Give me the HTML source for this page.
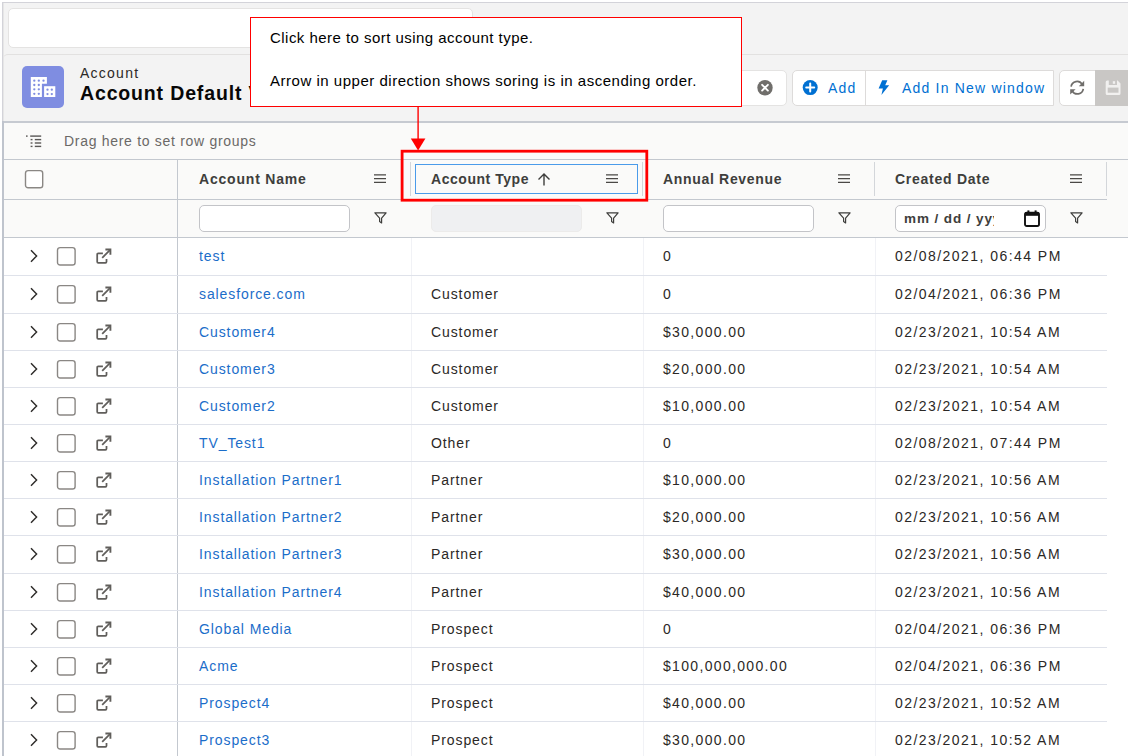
<!DOCTYPE html>
<html lang="en">
<head>
<meta charset="utf-8">
<title>Account Default View</title>
<style>
*{box-sizing:border-box;margin:0;padding:0}
html,body{width:1128px;height:756px;overflow:hidden;background:#fff}
body{font-family:"Liberation Sans","DejaVu Sans",sans-serif;font-size:14px;color:#1b1b1b;position:relative}
.abs{position:absolute}
#frame{left:2px;top:2px;width:1140px;height:770px;background:#f3f3f3;border:1px solid #d3d3d9}
#search{left:8px;top:8px;width:465px;height:40px;background:#fff;border:1px solid #e4e3e2;border-radius:5px}
#hdr{left:3px;top:54px;width:1140px;height:69px;background:#f3f3f3;border-top:1px solid #e2e1e0;border-bottom:2px solid #c6cad1;border-top-left-radius:5px}
#icon{left:22px;top:66px;width:42px;height:42px;border-radius:5px;background:#7f8de1}
#t1{left:80px;top:64px;font-size:14px;letter-spacing:1.25px;color:#2b2826;line-height:18px}
#t2{left:80px;top:80px;font-size:19.5px;font-weight:700;letter-spacing:.85px;color:#080707;line-height:26px;white-space:nowrap}
#sbox{left:600px;top:70px;width:187px;height:36px;background:#fff;border:1px solid #e4e3e2;border-radius:5px}
.bg{background:#fff;border:1px solid #dddbda;border-radius:5px;height:36px;top:70px}
.btn{color:#0070d2;font-size:14px;letter-spacing:1.2px;line-height:34px;white-space:nowrap}
#callout{left:250px;top:17px;width:492px;height:90px;background:#fff;border:1px solid #f00;font-size:15px;color:#000;line-height:20px}
#callout div{position:absolute;left:19px;white-space:nowrap;letter-spacing:.46px}
#grid{left:3px;top:123px;width:1140px;height:640px;background:#fff}
#drag{left:0;top:0;width:1140px;height:37px;background:#fafaf9;border-bottom:1px solid #c3c8cf;color:#6b6967;letter-spacing:.7px;line-height:35px}
#hrow{left:0;top:37px;width:1140px;height:40px;background:#fafaf9}
#frow{left:0;top:77px;width:1140px;height:38px;background:#fafaf9;border-bottom:1px solid #c3c8cf}
#hline{left:0;top:76px;width:1104px;height:1px;background:#c3c8cf}
.hsep{top:39px;width:1px;height:34px;background:#d3d6da}
.hc{top:37px;height:40px;line-height:39px;font-weight:700;color:#3e3e3c;letter-spacing:.62px;white-space:nowrap}
.fin{top:82px;width:151px;height:27px;border:1px solid #c3c4c8;border-radius:5px;background:#fff}
.row{left:0;width:1104px;border-bottom:1px solid #dfe2ea;white-space:nowrap}
.c{position:absolute;top:0;height:36px;display:flex;align-items:center;letter-spacing:.9px;color:#2b2826}
.c.num{letter-spacing:1.33px}
.c.dt{letter-spacing:1.45px}
.c.lnk{color:#1b6dc9}
.vsep{top:115px;width:1px;height:530px;background:#f1f2f6}
#pinsep{left:174px;top:37px;width:1px;height:610px;background:#c3c8cf}
#focus{left:412px;top:41px;width:223px;height:30px;border:1px solid #4a9bea}
.fin.dis{background:#eff0f2;border-color:#ecebea}
#dtxt{left:8px;top:0;width:90px;overflow:hidden;line-height:25px;font-weight:700;color:#3e3e3c;letter-spacing:.9px;font-size:13.5px;white-space:nowrap}
svg{position:absolute;overflow:visible}
</style>
</head>
<body>
<div id="frame" class="abs"></div>
<div id="search" class="abs"></div>
<div id="hdr" class="abs"></div>
<div id="icon" class="abs">
<svg width="42" height="42" viewBox="0 0 42 42" style="left:0;top:0"><g fill="#fff"><path d="M8.8 10.9H24.9V17.8H19.9V31H8.8Z"/><rect x="22.1" y="20.2" width="11.2" height="10.8"/></g><g fill="#7f8de1"><circle cx="12.3" cy="14.7" r="1.15"/><circle cx="16.8" cy="14.7" r="1.15"/><circle cx="12.3" cy="19.0" r="1.15"/><circle cx="16.8" cy="19.0" r="1.15"/><circle cx="12.3" cy="23.3" r="1.15"/><circle cx="16.8" cy="23.3" r="1.15"/><circle cx="12.3" cy="27.8" r="1.15"/><circle cx="16.8" cy="27.8" r="1.15"/><circle cx="21.5" cy="14.7" r="1.15"/><circle cx="25.5" cy="23.7" r="1.15"/><circle cx="29.8" cy="23.7" r="1.15"/><circle cx="25.5" cy="28.1" r="1.15"/><circle cx="29.8" cy="28.1" r="1.15"/></g></svg>
</div>
<div id="t1" class="abs">Account</div>
<div id="t2" class="abs">Account Default View</div>
<div id="sbox" class="abs"></div>
<div id="bg1" class="abs bg" style="left:792px;width:262px;border-radius:5px 0 0 5px"></div>
<div id="bg2" class="abs bg" style="left:1059px;width:80px"></div>
<svg width="16" height="16" viewBox="0 0 16 16" style="left:757px;top:80px"><circle cx="8" cy="7.7" r="7.7" fill="#706e6b"/><path d="M5.1 4.8L10.9 10.6M10.9 4.8L5.1 10.6" stroke="#fff" stroke-width="1.9" stroke-linecap="round"/></svg>
<div class="abs" style="left:865px;top:71px;width:1px;height:34px;background:#dddbda"></div>
<svg width="16" height="16" viewBox="0 0 16 16" style="left:802px;top:80px"><circle cx="8.2" cy="7.6" r="7.5" fill="#0070d2"/><path d="M8.2 3.6V11.6M4.2 7.6H12.2" stroke="#fff" stroke-width="2" stroke-linecap="round"/></svg>
<div class="abs btn" style="left:828px;top:71px">Add</div>
<svg width="12" height="16" viewBox="0 0 12 16" style="left:878px;top:80px"><path d="M4.2 0.2H9.4L7.2 5.2H11.2L3.4 15L4.9 8.4H0.6Z" fill="#0070d2"/></svg>
<div class="abs btn" style="left:902px;top:71px">Add In New window</div>
<div class="abs" style="left:1095px;top:70px;width:40px;height:36px;background:#c9c7c5"></div>
<svg width="16" height="16" viewBox="0 0 16 16" style="left:1069px;top:80px"><g fill="none" stroke="#706e6b" stroke-width="1.7"><path d="M2.1 6.6A6 6 0 0 1 13.2 4.4"/><path d="M14.3 8.8A6 6 0 0 1 3.2 11"/></g><path d="M15.2 0.8V6.2H9.8Z" fill="#706e6b"/><path d="M1.2 14.6V9.2H6.6Z" fill="#706e6b"/></svg>
<svg width="16" height="16" viewBox="0 0 16 16" style="left:1105px;top:80px"><path d="M2.2 0.5H12.6L15.5 3.4V13.5A1.5 1.5 0 0 1 14 15H2.2A1.5 1.5 0 0 1 0.7 13.5V2A1.5 1.5 0 0 1 2.2 0.5Z" fill="#f1f0ef"/><rect x="3.8" y="0" width="8.2" height="5" fill="#c9c7c5"/><rect x="2.7" y="7.6" width="10.8" height="5.1" fill="#c9c7c5"/><rect x="7.8" y="1.2" width="2.3" height="2.6" fill="#f1f0ef"/></svg>
<div id="callout" class="abs">
<div style="top:10px">Click here to sort using account type.</div>
<div style="top:53px;letter-spacing:.515px">Arrow in upper direction shows soring is in ascending order.</div>
</div>
<div id="grid" class="abs">
<div id="drag" class="abs"><span class="abs" style="left:61px;top:1px">Drag here to set row groups</span></div>
<div id="hrow" class="abs"></div>
<div id="frow" class="abs"></div>
<div id="hline" class="abs"></div>
<div id="pinsep" class="abs"></div>
<div class="abs hc" style="left:196px;letter-spacing:.8px">Account Name</div>
<div class="abs hc" style="left:428px;letter-spacing:.54px">Account Type</div>
<div class="abs hc" style="left:660px;letter-spacing:.68px">Annual Revenue</div>
<div class="abs hc" style="left:892px;letter-spacing:.74px">Created Date</div>
<div class="abs hsep" style="left:407px"></div>
<div class="abs hsep" style="left:639px"></div>
<div class="abs hsep" style="left:871px"></div>
<div class="abs hsep" style="left:1103px"></div>
<div id="focus" class="abs"></div>
<svg width="20" height="20" viewBox="0 0 20 20" style="left:21px;top:46px"><rect x="1.5" y="1.6" width="17.2" height="17.2" rx="2.6" fill="#fff" stroke="#8a8784" stroke-width="1.4"/></svg>
<div class="abs fin" style="left:196px"></div>
<div class="abs fin dis" style="left:428px"></div>
<div class="abs fin" style="left:660px"></div>
<div class="abs fin" style="left:892px"><span class="abs" id="dtxt">mm / dd / yyyy</span><svg width="16" height="17" viewBox="0 0 16 17" style="left:128px;top:4px"><rect x="1" y="2.6" width="14" height="13.4" rx="1.8" fill="none" stroke="#111" stroke-width="1.9"/><rect x="1" y="2.2" width="14" height="3.6" fill="#111"/><rect x="3.4" y="0.4" width="2" height="2.4" fill="#111"/><rect x="10.6" y="0.4" width="2" height="2.4" fill="#111"/></svg></div>
<div class="abs vsep" style="left:408px"></div>
<div class="abs vsep" style="left:640px"></div>
<div class="abs vsep" style="left:872px"></div>
<svg width="12" height="9" viewBox="0 0 12 9" style="left:371px;top:51px"><path d="M0 0.9H12M0 4.6H12M0 8.4H12" stroke="#4a4846" stroke-width="1.3"/></svg>
<svg width="13" height="12" viewBox="0 0 13 12" style="left:371px;top:89px"><path d="M0.9 0.8H12.1L7.6 6.2V10.9L5.6 9.4V6.2Z" fill="none" stroke="#3e3e3c" stroke-width="1.2" stroke-linejoin="round"/></svg>
<svg width="12" height="9" viewBox="0 0 12 9" style="left:603px;top:51px"><path d="M0 0.9H12M0 4.6H12M0 8.4H12" stroke="#4a4846" stroke-width="1.3"/></svg>
<svg width="13" height="12" viewBox="0 0 13 12" style="left:603px;top:89px"><path d="M0.9 0.8H12.1L7.6 6.2V10.9L5.6 9.4V6.2Z" fill="none" stroke="#3e3e3c" stroke-width="1.2" stroke-linejoin="round"/></svg>
<svg width="12" height="9" viewBox="0 0 12 9" style="left:835px;top:51px"><path d="M0 0.9H12M0 4.6H12M0 8.4H12" stroke="#4a4846" stroke-width="1.3"/></svg>
<svg width="13" height="12" viewBox="0 0 13 12" style="left:835px;top:89px"><path d="M0.9 0.8H12.1L7.6 6.2V10.9L5.6 9.4V6.2Z" fill="none" stroke="#3e3e3c" stroke-width="1.2" stroke-linejoin="round"/></svg>
<svg width="12" height="9" viewBox="0 0 12 9" style="left:1067px;top:51px"><path d="M0 0.9H12M0 4.6H12M0 8.4H12" stroke="#4a4846" stroke-width="1.3"/></svg>
<svg width="13" height="12" viewBox="0 0 13 12" style="left:1067px;top:89px"><path d="M0.9 0.8H12.1L7.6 6.2V10.9L5.6 9.4V6.2Z" fill="none" stroke="#3e3e3c" stroke-width="1.2" stroke-linejoin="round"/></svg>
<svg width="12" height="13" viewBox="0 0 12 13" style="left:535px;top:50px"><path d="M6 12.4V1.2M0.5 6.6L6 1L11.5 6.6" fill="none" stroke="#3e3e3c" stroke-width="1.4"/></svg>
<svg width="14" height="12" viewBox="0 0 14 12" style="left:23px;top:12px"><g fill="#5a5856"><rect x="0" y="0.4" width="1.6" height="1.4"/><rect x="4.2" y="0.4" width="11" height="1.4"/><rect x="4.6" y="3.9" width="1.9" height="1.4"/><rect x="8.8" y="3.9" width="6.4" height="1.4"/><rect x="4.6" y="7.3" width="1.9" height="1.4"/><rect x="8.8" y="7.3" width="6.4" height="1.4"/><rect x="4.6" y="10.7" width="1.9" height="1.4"/><rect x="8.8" y="10.7" width="6.4" height="1.4"/></g></svg>
<div class="abs row" style="top:115px;height:38px"><svg class="chev" width="8" height="14" viewBox="0 0 8 14" style="left:27px;top:11px"><path d="M1 1.2 L6.6 7 L1 12.8" fill="none" stroke="#2e2c2a" stroke-width="1.45"/></svg><svg class="cbx" width="20" height="20" viewBox="0 0 20 20" style="left:53px;top:8px"><rect x="1.5" y="1.6" width="17.6" height="17.4" rx="2.6" fill="#fff" stroke="#8a8784" stroke-width="1.4"/></svg><svg class="ext" width="16" height="16" viewBox="0 0 16 16" style="left:93px;top:10px"><path d="M6.9 5.4H2.2a1 1 0 0 0-1 1V13.8a1 1 0 0 0 1 1H9.5a1 1 0 0 0 1-1V10.9" fill="none" stroke="#605e5b" stroke-width="1.75"/><path d="M6.2 9.8L13.9 2.1" fill="none" stroke="#605e5b" stroke-width="1.75"/><path d="M9.4 1.5H14.4V6.7" fill="none" stroke="#605e5b" stroke-width="1.9"/></svg><span class="c lnk" style="left:196px">test</span><span class="c" style="left:428px"></span><span class="c num" style="left:660px">0</span><span class="c dt" style="left:892px">02/08/2021, 06:44 PM</span></div>
<div class="abs row" style="top:153px;height:38px"><svg class="chev" width="8" height="14" viewBox="0 0 8 14" style="left:27px;top:11px"><path d="M1 1.2 L6.6 7 L1 12.8" fill="none" stroke="#2e2c2a" stroke-width="1.45"/></svg><svg class="cbx" width="20" height="20" viewBox="0 0 20 20" style="left:53px;top:8px"><rect x="1.5" y="1.6" width="17.6" height="17.4" rx="2.6" fill="#fff" stroke="#8a8784" stroke-width="1.4"/></svg><svg class="ext" width="16" height="16" viewBox="0 0 16 16" style="left:93px;top:10px"><path d="M6.9 5.4H2.2a1 1 0 0 0-1 1V13.8a1 1 0 0 0 1 1H9.5a1 1 0 0 0 1-1V10.9" fill="none" stroke="#605e5b" stroke-width="1.75"/><path d="M6.2 9.8L13.9 2.1" fill="none" stroke="#605e5b" stroke-width="1.75"/><path d="M9.4 1.5H14.4V6.7" fill="none" stroke="#605e5b" stroke-width="1.9"/></svg><span class="c lnk" style="left:196px">salesforce.com</span><span class="c" style="left:428px">Customer</span><span class="c num" style="left:660px">0</span><span class="c dt" style="left:892px">02/04/2021, 06:36 PM</span></div>
<div class="abs row" style="top:191px;height:37px"><svg class="chev" width="8" height="14" viewBox="0 0 8 14" style="left:27px;top:11px"><path d="M1 1.2 L6.6 7 L1 12.8" fill="none" stroke="#2e2c2a" stroke-width="1.45"/></svg><svg class="cbx" width="20" height="20" viewBox="0 0 20 20" style="left:53px;top:8px"><rect x="1.5" y="1.6" width="17.6" height="17.4" rx="2.6" fill="#fff" stroke="#8a8784" stroke-width="1.4"/></svg><svg class="ext" width="16" height="16" viewBox="0 0 16 16" style="left:93px;top:10px"><path d="M6.9 5.4H2.2a1 1 0 0 0-1 1V13.8a1 1 0 0 0 1 1H9.5a1 1 0 0 0 1-1V10.9" fill="none" stroke="#605e5b" stroke-width="1.75"/><path d="M6.2 9.8L13.9 2.1" fill="none" stroke="#605e5b" stroke-width="1.75"/><path d="M9.4 1.5H14.4V6.7" fill="none" stroke="#605e5b" stroke-width="1.9"/></svg><span class="c lnk" style="left:196px">Customer4</span><span class="c" style="left:428px">Customer</span><span class="c num" style="left:660px">$30,000.00</span><span class="c dt" style="left:892px">02/23/2021, 10:54 AM</span></div>
<div class="abs row" style="top:228px;height:37px"><svg class="chev" width="8" height="14" viewBox="0 0 8 14" style="left:27px;top:11px"><path d="M1 1.2 L6.6 7 L1 12.8" fill="none" stroke="#2e2c2a" stroke-width="1.45"/></svg><svg class="cbx" width="20" height="20" viewBox="0 0 20 20" style="left:53px;top:8px"><rect x="1.5" y="1.6" width="17.6" height="17.4" rx="2.6" fill="#fff" stroke="#8a8784" stroke-width="1.4"/></svg><svg class="ext" width="16" height="16" viewBox="0 0 16 16" style="left:93px;top:10px"><path d="M6.9 5.4H2.2a1 1 0 0 0-1 1V13.8a1 1 0 0 0 1 1H9.5a1 1 0 0 0 1-1V10.9" fill="none" stroke="#605e5b" stroke-width="1.75"/><path d="M6.2 9.8L13.9 2.1" fill="none" stroke="#605e5b" stroke-width="1.75"/><path d="M9.4 1.5H14.4V6.7" fill="none" stroke="#605e5b" stroke-width="1.9"/></svg><span class="c lnk" style="left:196px">Customer3</span><span class="c" style="left:428px">Customer</span><span class="c num" style="left:660px">$20,000.00</span><span class="c dt" style="left:892px">02/23/2021, 10:54 AM</span></div>
<div class="abs row" style="top:265px;height:37px"><svg class="chev" width="8" height="14" viewBox="0 0 8 14" style="left:27px;top:11px"><path d="M1 1.2 L6.6 7 L1 12.8" fill="none" stroke="#2e2c2a" stroke-width="1.45"/></svg><svg class="cbx" width="20" height="20" viewBox="0 0 20 20" style="left:53px;top:8px"><rect x="1.5" y="1.6" width="17.6" height="17.4" rx="2.6" fill="#fff" stroke="#8a8784" stroke-width="1.4"/></svg><svg class="ext" width="16" height="16" viewBox="0 0 16 16" style="left:93px;top:10px"><path d="M6.9 5.4H2.2a1 1 0 0 0-1 1V13.8a1 1 0 0 0 1 1H9.5a1 1 0 0 0 1-1V10.9" fill="none" stroke="#605e5b" stroke-width="1.75"/><path d="M6.2 9.8L13.9 2.1" fill="none" stroke="#605e5b" stroke-width="1.75"/><path d="M9.4 1.5H14.4V6.7" fill="none" stroke="#605e5b" stroke-width="1.9"/></svg><span class="c lnk" style="left:196px">Customer2</span><span class="c" style="left:428px">Customer</span><span class="c num" style="left:660px">$10,000.00</span><span class="c dt" style="left:892px">02/23/2021, 10:54 AM</span></div>
<div class="abs row" style="top:302px;height:37px"><svg class="chev" width="8" height="14" viewBox="0 0 8 14" style="left:27px;top:11px"><path d="M1 1.2 L6.6 7 L1 12.8" fill="none" stroke="#2e2c2a" stroke-width="1.45"/></svg><svg class="cbx" width="20" height="20" viewBox="0 0 20 20" style="left:53px;top:8px"><rect x="1.5" y="1.6" width="17.6" height="17.4" rx="2.6" fill="#fff" stroke="#8a8784" stroke-width="1.4"/></svg><svg class="ext" width="16" height="16" viewBox="0 0 16 16" style="left:93px;top:10px"><path d="M6.9 5.4H2.2a1 1 0 0 0-1 1V13.8a1 1 0 0 0 1 1H9.5a1 1 0 0 0 1-1V10.9" fill="none" stroke="#605e5b" stroke-width="1.75"/><path d="M6.2 9.8L13.9 2.1" fill="none" stroke="#605e5b" stroke-width="1.75"/><path d="M9.4 1.5H14.4V6.7" fill="none" stroke="#605e5b" stroke-width="1.9"/></svg><span class="c lnk" style="left:196px">TV_Test1</span><span class="c" style="left:428px">Other</span><span class="c num" style="left:660px">0</span><span class="c dt" style="left:892px">02/08/2021, 07:44 PM</span></div>
<div class="abs row" style="top:339px;height:37px"><svg class="chev" width="8" height="14" viewBox="0 0 8 14" style="left:27px;top:11px"><path d="M1 1.2 L6.6 7 L1 12.8" fill="none" stroke="#2e2c2a" stroke-width="1.45"/></svg><svg class="cbx" width="20" height="20" viewBox="0 0 20 20" style="left:53px;top:8px"><rect x="1.5" y="1.6" width="17.6" height="17.4" rx="2.6" fill="#fff" stroke="#8a8784" stroke-width="1.4"/></svg><svg class="ext" width="16" height="16" viewBox="0 0 16 16" style="left:93px;top:10px"><path d="M6.9 5.4H2.2a1 1 0 0 0-1 1V13.8a1 1 0 0 0 1 1H9.5a1 1 0 0 0 1-1V10.9" fill="none" stroke="#605e5b" stroke-width="1.75"/><path d="M6.2 9.8L13.9 2.1" fill="none" stroke="#605e5b" stroke-width="1.75"/><path d="M9.4 1.5H14.4V6.7" fill="none" stroke="#605e5b" stroke-width="1.9"/></svg><span class="c lnk" style="left:196px">Installation Partner1</span><span class="c" style="left:428px">Partner</span><span class="c num" style="left:660px">$10,000.00</span><span class="c dt" style="left:892px">02/23/2021, 10:56 AM</span></div>
<div class="abs row" style="top:376px;height:37px"><svg class="chev" width="8" height="14" viewBox="0 0 8 14" style="left:27px;top:11px"><path d="M1 1.2 L6.6 7 L1 12.8" fill="none" stroke="#2e2c2a" stroke-width="1.45"/></svg><svg class="cbx" width="20" height="20" viewBox="0 0 20 20" style="left:53px;top:8px"><rect x="1.5" y="1.6" width="17.6" height="17.4" rx="2.6" fill="#fff" stroke="#8a8784" stroke-width="1.4"/></svg><svg class="ext" width="16" height="16" viewBox="0 0 16 16" style="left:93px;top:10px"><path d="M6.9 5.4H2.2a1 1 0 0 0-1 1V13.8a1 1 0 0 0 1 1H9.5a1 1 0 0 0 1-1V10.9" fill="none" stroke="#605e5b" stroke-width="1.75"/><path d="M6.2 9.8L13.9 2.1" fill="none" stroke="#605e5b" stroke-width="1.75"/><path d="M9.4 1.5H14.4V6.7" fill="none" stroke="#605e5b" stroke-width="1.9"/></svg><span class="c lnk" style="left:196px">Installation Partner2</span><span class="c" style="left:428px">Partner</span><span class="c num" style="left:660px">$20,000.00</span><span class="c dt" style="left:892px">02/23/2021, 10:56 AM</span></div>
<div class="abs row" style="top:413px;height:38px"><svg class="chev" width="8" height="14" viewBox="0 0 8 14" style="left:27px;top:11px"><path d="M1 1.2 L6.6 7 L1 12.8" fill="none" stroke="#2e2c2a" stroke-width="1.45"/></svg><svg class="cbx" width="20" height="20" viewBox="0 0 20 20" style="left:53px;top:8px"><rect x="1.5" y="1.6" width="17.6" height="17.4" rx="2.6" fill="#fff" stroke="#8a8784" stroke-width="1.4"/></svg><svg class="ext" width="16" height="16" viewBox="0 0 16 16" style="left:93px;top:10px"><path d="M6.9 5.4H2.2a1 1 0 0 0-1 1V13.8a1 1 0 0 0 1 1H9.5a1 1 0 0 0 1-1V10.9" fill="none" stroke="#605e5b" stroke-width="1.75"/><path d="M6.2 9.8L13.9 2.1" fill="none" stroke="#605e5b" stroke-width="1.75"/><path d="M9.4 1.5H14.4V6.7" fill="none" stroke="#605e5b" stroke-width="1.9"/></svg><span class="c lnk" style="left:196px">Installation Partner3</span><span class="c" style="left:428px">Partner</span><span class="c num" style="left:660px">$30,000.00</span><span class="c dt" style="left:892px">02/23/2021, 10:56 AM</span></div>
<div class="abs row" style="top:451px;height:37px"><svg class="chev" width="8" height="14" viewBox="0 0 8 14" style="left:27px;top:11px"><path d="M1 1.2 L6.6 7 L1 12.8" fill="none" stroke="#2e2c2a" stroke-width="1.45"/></svg><svg class="cbx" width="20" height="20" viewBox="0 0 20 20" style="left:53px;top:8px"><rect x="1.5" y="1.6" width="17.6" height="17.4" rx="2.6" fill="#fff" stroke="#8a8784" stroke-width="1.4"/></svg><svg class="ext" width="16" height="16" viewBox="0 0 16 16" style="left:93px;top:10px"><path d="M6.9 5.4H2.2a1 1 0 0 0-1 1V13.8a1 1 0 0 0 1 1H9.5a1 1 0 0 0 1-1V10.9" fill="none" stroke="#605e5b" stroke-width="1.75"/><path d="M6.2 9.8L13.9 2.1" fill="none" stroke="#605e5b" stroke-width="1.75"/><path d="M9.4 1.5H14.4V6.7" fill="none" stroke="#605e5b" stroke-width="1.9"/></svg><span class="c lnk" style="left:196px">Installation Partner4</span><span class="c" style="left:428px">Partner</span><span class="c num" style="left:660px">$40,000.00</span><span class="c dt" style="left:892px">02/23/2021, 10:56 AM</span></div>
<div class="abs row" style="top:488px;height:37px"><svg class="chev" width="8" height="14" viewBox="0 0 8 14" style="left:27px;top:11px"><path d="M1 1.2 L6.6 7 L1 12.8" fill="none" stroke="#2e2c2a" stroke-width="1.45"/></svg><svg class="cbx" width="20" height="20" viewBox="0 0 20 20" style="left:53px;top:8px"><rect x="1.5" y="1.6" width="17.6" height="17.4" rx="2.6" fill="#fff" stroke="#8a8784" stroke-width="1.4"/></svg><svg class="ext" width="16" height="16" viewBox="0 0 16 16" style="left:93px;top:10px"><path d="M6.9 5.4H2.2a1 1 0 0 0-1 1V13.8a1 1 0 0 0 1 1H9.5a1 1 0 0 0 1-1V10.9" fill="none" stroke="#605e5b" stroke-width="1.75"/><path d="M6.2 9.8L13.9 2.1" fill="none" stroke="#605e5b" stroke-width="1.75"/><path d="M9.4 1.5H14.4V6.7" fill="none" stroke="#605e5b" stroke-width="1.9"/></svg><span class="c lnk" style="left:196px">Global Media</span><span class="c" style="left:428px">Prospect</span><span class="c num" style="left:660px">0</span><span class="c dt" style="left:892px">02/04/2021, 06:36 PM</span></div>
<div class="abs row" style="top:525px;height:37px"><svg class="chev" width="8" height="14" viewBox="0 0 8 14" style="left:27px;top:11px"><path d="M1 1.2 L6.6 7 L1 12.8" fill="none" stroke="#2e2c2a" stroke-width="1.45"/></svg><svg class="cbx" width="20" height="20" viewBox="0 0 20 20" style="left:53px;top:8px"><rect x="1.5" y="1.6" width="17.6" height="17.4" rx="2.6" fill="#fff" stroke="#8a8784" stroke-width="1.4"/></svg><svg class="ext" width="16" height="16" viewBox="0 0 16 16" style="left:93px;top:10px"><path d="M6.9 5.4H2.2a1 1 0 0 0-1 1V13.8a1 1 0 0 0 1 1H9.5a1 1 0 0 0 1-1V10.9" fill="none" stroke="#605e5b" stroke-width="1.75"/><path d="M6.2 9.8L13.9 2.1" fill="none" stroke="#605e5b" stroke-width="1.75"/><path d="M9.4 1.5H14.4V6.7" fill="none" stroke="#605e5b" stroke-width="1.9"/></svg><span class="c lnk" style="left:196px">Acme</span><span class="c" style="left:428px">Prospect</span><span class="c num" style="left:660px">$100,000,000.00</span><span class="c dt" style="left:892px">02/04/2021, 06:36 PM</span></div>
<div class="abs row" style="top:562px;height:37px"><svg class="chev" width="8" height="14" viewBox="0 0 8 14" style="left:27px;top:11px"><path d="M1 1.2 L6.6 7 L1 12.8" fill="none" stroke="#2e2c2a" stroke-width="1.45"/></svg><svg class="cbx" width="20" height="20" viewBox="0 0 20 20" style="left:53px;top:8px"><rect x="1.5" y="1.6" width="17.6" height="17.4" rx="2.6" fill="#fff" stroke="#8a8784" stroke-width="1.4"/></svg><svg class="ext" width="16" height="16" viewBox="0 0 16 16" style="left:93px;top:10px"><path d="M6.9 5.4H2.2a1 1 0 0 0-1 1V13.8a1 1 0 0 0 1 1H9.5a1 1 0 0 0 1-1V10.9" fill="none" stroke="#605e5b" stroke-width="1.75"/><path d="M6.2 9.8L13.9 2.1" fill="none" stroke="#605e5b" stroke-width="1.75"/><path d="M9.4 1.5H14.4V6.7" fill="none" stroke="#605e5b" stroke-width="1.9"/></svg><span class="c lnk" style="left:196px">Prospect4</span><span class="c" style="left:428px">Prospect</span><span class="c num" style="left:660px">$40,000.00</span><span class="c dt" style="left:892px">02/23/2021, 10:52 AM</span></div>
<div class="abs row" style="top:599px;height:38px"><svg class="chev" width="8" height="14" viewBox="0 0 8 14" style="left:27px;top:11px"><path d="M1 1.2 L6.6 7 L1 12.8" fill="none" stroke="#2e2c2a" stroke-width="1.45"/></svg><svg class="cbx" width="20" height="20" viewBox="0 0 20 20" style="left:53px;top:8px"><rect x="1.5" y="1.6" width="17.6" height="17.4" rx="2.6" fill="#fff" stroke="#8a8784" stroke-width="1.4"/></svg><svg class="ext" width="16" height="16" viewBox="0 0 16 16" style="left:93px;top:10px"><path d="M6.9 5.4H2.2a1 1 0 0 0-1 1V13.8a1 1 0 0 0 1 1H9.5a1 1 0 0 0 1-1V10.9" fill="none" stroke="#605e5b" stroke-width="1.75"/><path d="M6.2 9.8L13.9 2.1" fill="none" stroke="#605e5b" stroke-width="1.75"/><path d="M9.4 1.5H14.4V6.7" fill="none" stroke="#605e5b" stroke-width="1.9"/></svg><span class="c lnk" style="left:196px">Prospect3</span><span class="c" style="left:428px">Prospect</span><span class="c num" style="left:660px">$30,000.00</span><span class="c dt" style="left:892px">02/23/2021, 10:52 AM</span></div>
</div>
<div class="abs" style="left:3px;top:3px;width:1px;height:118px;background:#e6e6e6"></div>
<div class="abs" style="left:2px;top:121px;width:2px;height:640px;background:#bfc4cd"></div>
<svg width="1128" height="756" viewBox="0 0 1128 756" style="left:0;top:0;pointer-events:none"><rect x="402.1" y="151.2" width="244.7" height="49" fill="none" stroke="#f00" stroke-width="2.8"/><path d="M418.1 107V140" stroke="#f00" stroke-width="1.4"/><path d="M410.8 138.5H425.4L418.1 150.6Z" fill="#f00"/></svg>
</body>
</html>
